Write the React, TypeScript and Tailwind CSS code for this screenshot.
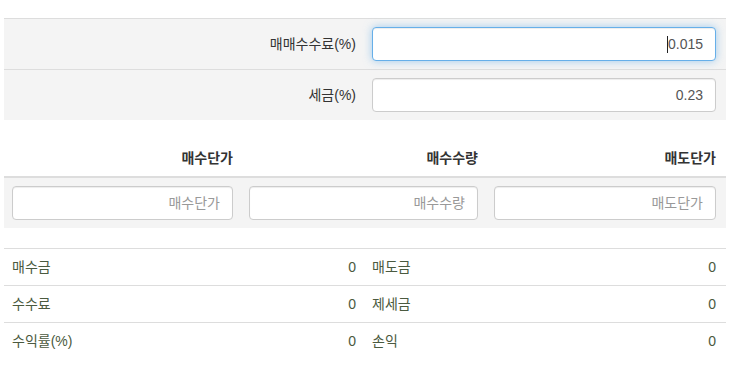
import React from "react";

const font = { fontFamily: '"Liberation Sans", "Noto Sans CJK KR", sans-serif' };

function Field({ value, placeholder, focused }: { value?: string; placeholder?: string; focused?: boolean }) {
  return (
    <div
      className={
        "h-[34px] w-full rounded-[4px] border bg-white px-3 flex items-center justify-end text-[14px] " +
        (focused
          ? "border-[#66afe9] shadow-[inset_0_1px_1px_rgba(0,0,0,0.075),0_0_8px_rgba(102,175,233,0.6)]"
          : "border-[#ccc] shadow-[inset_0_1px_1px_rgba(0,0,0,0.075)]")
      }
    >
      {focused && <span className="inline-block w-px h-[17px] bg-[#222]" />}
      {value ? (
        <span className="text-[#555]">{value}</span>
      ) : (
        <span className="text-[#999]">{placeholder}</span>
      )}
    </div>
  );
}

export default function App() {
  const rows = [
    ["매수금", "0", "매도금", "0"],
    ["수수료", "0", "제세금", "0"],
    ["수익률(%)", "0", "손익", "0"],
  ];
  return (
    <div className="w-[730px] h-[367px] bg-white text-[14px] leading-[20px] text-[#333]" style={font}>
      <div className="px-[4px] pt-[18px]">
        <div className="bg-[#f4f4f4]">
          <div className="grid grid-cols-[360px_360px] border-t border-[#ddd]">
            <div className="p-2 flex items-center justify-end">매매수수료(%)</div>
            <div className="p-2">
              <Field value="0.015" focused />
            </div>
          </div>
          <div className="grid grid-cols-[360px_360px] border-t border-[#ddd]">
            <div className="p-2 flex items-center justify-end">세금(%)</div>
            <div className="p-2">
              <Field value="0.23" />
            </div>
          </div>
        </div>

        <div className="mt-[20px]">
          <div className="grid grid-cols-[237px_245px_238px] border-b-2 border-[#ddd] font-bold">
            <div className="p-2 text-right">매수단가</div>
            <div className="p-2 text-right">매수수량</div>
            <div className="p-2 text-right">매도단가</div>
          </div>
          <div className="grid grid-cols-[237px_245px_238px] bg-[#f4f4f4]">
            <div className="p-2">
              <Field placeholder="매수단가" />
            </div>
            <div className="p-2">
              <Field placeholder="매수수량" />
            </div>
            <div className="p-2">
              <Field placeholder="매도단가" />
            </div>
          </div>
        </div>

        <div className="mt-[20px] text-[#4b5a40]">
          {rows.map((r, i) => (
            <div key={i} className="grid grid-cols-[180px_180px_180px_180px] border-t border-[#ddd]">
              <div className="p-2">{r[0]}</div>
              <div className="p-2 text-right">{r[1]}</div>
              <div className="p-2">{r[2]}</div>
              <div className="p-2 text-right">{r[3]}</div>
            </div>
          ))}
        </div>
      </div>
    </div>
  );
}
